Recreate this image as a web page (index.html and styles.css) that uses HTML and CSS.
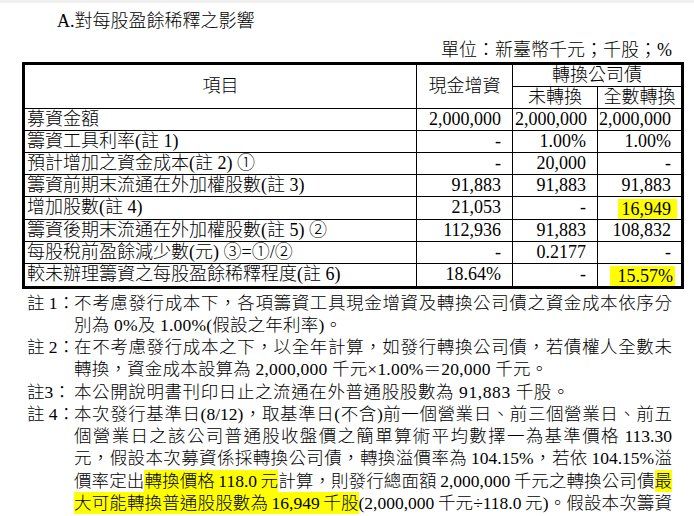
FILE: index.html
```html
<!DOCTYPE html>
<html lang="zh-Hant">
<head>
<meta charset="utf-8">
<title>A.對每股盈餘稀釋之影響</title>
<link rel="stylesheet" href="styles.css">
</head>
<body>
<div class="topbar"></div>
<h1 class="title">A.對每股盈餘稀釋之影響</h1>
<div class="unit">單位：新臺幣千元；千股；%</div>
<table class="eps">
  <colgroup>
    <col class="c-item">
    <col class="c-cash">
    <col class="c-nc">
    <col class="c-fc">
  </colgroup>
  <thead>
    <tr>
      <th rowspan="2" class="hd">項目</th>
      <th rowspan="2" class="hd">現金增資</th>
      <th colspan="2" class="hd last">轉換公司債</th>
    </tr>
    <tr>
      <th class="hd">未轉換</th>
      <th class="hd last">全數轉換</th>
    </tr>
  </thead>
  <tbody>
    <tr><td class="it">募資金額</td><td class="n">2,000,000</td><td class="n wide">2,000,000</td><td class="n wide last">2,000,000</td></tr>
    <tr><td class="it">籌資工具利率(註 1)</td><td class="n">-</td><td class="n">1.00%</td><td class="n last">1.00%</td></tr>
    <tr><td class="it">預計增加之資金成本(註 2) ①</td><td class="n">-</td><td class="n">20,000</td><td class="n last">-</td></tr>
    <tr><td class="it">籌資前期末流通在外加權股數(註 3)</td><td class="n">91,883</td><td class="n">91,883</td><td class="n last">91,883</td></tr>
    <tr><td class="it">增加股數(註 4)</td><td class="n">21,053</td><td class="n">-</td><td class="n last hl-cell"><span class="hl hl-a">16,949</span></td></tr>
    <tr><td class="it">籌資後期末流通在外加權股數(註 5) ②</td><td class="n">112,936</td><td class="n">91,883</td><td class="n last">108,832</td></tr>
    <tr><td class="it">每股稅前盈餘減少數(元) ③=①/②</td><td class="n">-</td><td class="n">0.2177</td><td class="n last">-</td></tr>
    <tr class="lastrow"><td class="it">較未辦理籌資之每股盈餘稀釋程度(註 6)</td><td class="n">18.64%</td><td class="n">-</td><td class="n last hl-cell"><span class="hl hl-b">15.57%</span></td></tr>
  </tbody>
</table>
<div class="notes">
  <div class="note">
    <div class="lbl">註 1：</div>
    <div class="body">
      <div class="ln">不考慮發行成本下，各項籌資工具現金增資及轉換公司債之資金成本依序分</div>
      <div class="ln end">別為 0%及 1.00%(假設之年利率)。</div>
    </div>
  </div>
  <div class="note">
    <div class="lbl">註 2：</div>
    <div class="body">
      <div class="ln">在不考慮發行成本之下，以全年計算，如發行轉換公司債，若債權人全數未</div>
      <div class="ln end">轉換，資金成本設算為 2,000,000 千元×1.00%＝20,000 千元。</div>
    </div>
  </div>
  <div class="note">
    <div class="lbl">註3：</div>
    <div class="body">
      <div class="ln end end3">本公開說明書刊印日止之流通在外普通股股數為 91,883 千股。</div>
    </div>
  </div>
  <div class="note">
    <div class="lbl">註 4：</div>
    <div class="body">
      <div class="ln">本次發行基準日(8/12)，取基準日(不含)前一個營業日、前三個營業日、前五</div>
      <div class="ln">個營業日之該公司普通股收盤價之簡單算術平均數擇一為基準價格 113.30</div>
      <div class="ln">元，假設本次募資係採轉換公司債，轉換溢價率為 104.15%，若依 104.15%溢</div>
      <div class="ln">價率定出<span class="mark">轉換價格 118.0 元</span>計算，則發行總面額 2,000,000 千元之轉換公司債<span class="mark">最</span></div>
      <div class="ln"><span class="mark">大可能轉換普通股股數為 16,949 千股</span>(2,000,000 千元÷118.0 元)。假設本次籌資</div>
    </div>
  </div>
</div>
</body>
</html>
```
FILE: styles.css
```css
* {
  box-sizing: border-box;
}

html, body {
  margin: 0;
  padding: 0;
  background: #ffffff;
}

body {
  width: 694px;
  height: 516px;
  overflow: hidden;
  color: #000000;
  font-family: "Liberation Serif", "Noto Sans CJK TC", serif;
  font-weight: 300;
}

.topbar {
  height: 3px;
  background: #efefef;
}

.title {
  margin: 0;
  padding: 8px 0 0 57px;
  font-size: 18px;
  line-height: 20px;
  font-weight: 300;
}

.unit {
  margin-top: 9px;
  padding-right: 22px;
  text-align: right;
  font-size: 18px;
  line-height: 20px;
}

.eps {
  margin: 2px 0 0 22px;
  width: 662px;
  border: 3px solid #000000;
  border-collapse: separate;
  border-spacing: 0;
  table-layout: fixed;
  font-size: 18px;
}

.c-item { width: 392px; }
.c-cash { width: 96px; }
.c-nc { width: 85px; }
.c-fc { width: 83px; }

.eps th,
.eps td {
  padding: 0;
  height: 22px;
  line-height: 21px;
  border-right: 1px solid #000000;
  border-bottom: 1px solid #000000;
  white-space: nowrap;
  font-weight: 300;
  vertical-align: middle;
}

.eps .last {
  border-right: none;
}

.eps .lastrow td {
  border-bottom: none;
}

.eps .hd {
  text-align: center;
  letter-spacing: 0;
}

.eps .it {
  text-align: left;
  padding-left: 2px;
  overflow: hidden;
}

.eps .n {
  text-align: right;
  padding-right: 11px;
}

.eps .n.last {
  padding-right: 10px;
}

.eps .n.wide {
  padding-right: 10px;
  padding-left: 0;
  overflow: visible;
}

.eps .n.hl-cell {
  padding-right: 4px;
}

.hl {
  display: inline-block;
  background: #ffff00;
  line-height: 20px;
  vertical-align: middle;
}

.hl-a {
  padding: 0 6px 0 4px;
}

.hl-b {
  padding: 0 2px 0 8px;
  margin-right: 2px;
}

.notes {
  margin-top: 3px;
  padding-left: 27px;
  font-size: 17.5px;
  line-height: 22.2px;
}

.note {
  display: grid;
  grid-template-columns: 47px 598px;
}

.lbl {
  white-space: nowrap;
}

.ln {
  text-align: justify;
  text-align-last: justify;
  white-space: nowrap;
  word-spacing: -1px;
}

.ln.end {
  text-align: left;
  text-align-last: left;
  word-spacing: 0;
  letter-spacing: 0.2px;
}

.ln.end3 {
  letter-spacing: 0.6px;
}

.mark {
  background: #ffff00;
  padding: 1px 0;
}
```
